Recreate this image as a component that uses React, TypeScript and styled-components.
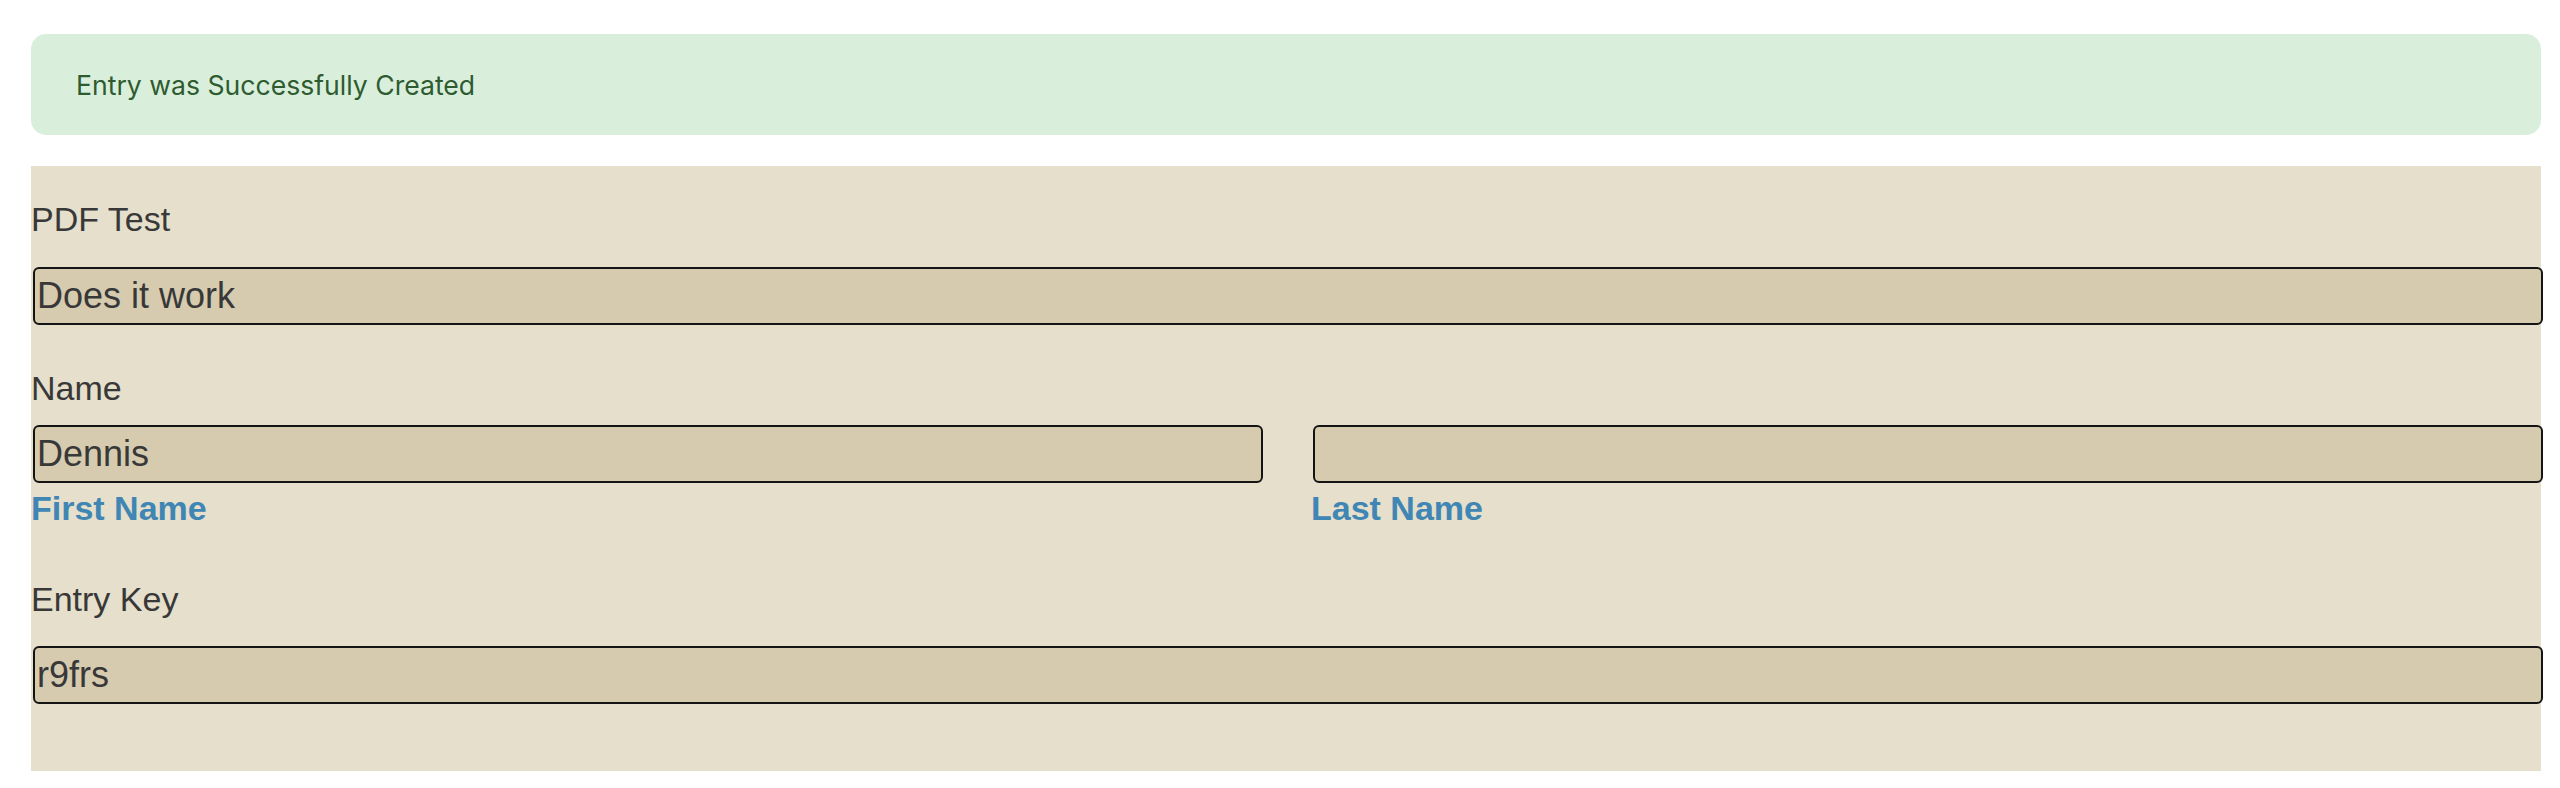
import React from "react";
import styled, { createGlobalStyle } from "styled-components";

const GlobalStyle = createGlobalStyle`
  html, body {
    margin: 0;
    padding: 0;
    background: #ffffff;
  }
  * { box-sizing: border-box; }
`;

const Page = styled.div`
  padding: 34px 19px 17px 31px;
  display: flex;
  flex-direction: column;
  gap: 31px;
`;

const Alert = styled.div`
  height: 101px;
  display: flex;
  align-items: center;
  padding: 0 45px;
  background: #d9efdc;
  border-radius: 15px;
  color: #2e5b30;
  font-family: Inter, "Noto Sans", sans-serif;
  font-size: 26.6px;
`;

const Panel = styled.form`
  background: #e5dfcb;
  padding: 34px 0 67px 0;
  display: flex;
  flex-direction: column;
  font-family: "Liberation Sans", Arial, sans-serif;
  color: #383838;
`;

const Field = styled.div<{ $gapAfter?: number }>`
  display: flex;
  flex-direction: column;
  margin-bottom: ${(p) => p.$gapAfter ?? 0}px;
`;

const Label = styled.label<{ $space: number }>`
  display: block;
  font-size: 34px;
  line-height: 39px;
  margin-bottom: ${(p) => p.$space}px;
`;

const Input = styled.input`
  display: block;
  width: 100%;
  height: 58px;
  margin: 0 0 0 2px;
  padding: 0 2px;
  background: #d6cbae;
  border: 2px solid #141414;
  border-radius: 6px;
  font-family: "Liberation Sans", Arial, sans-serif;
  font-size: 36px;
  color: #383838;
  outline: none;
`;

const Columns = styled.div`
  display: grid;
  grid-template-columns: 1fr 1fr;
  column-gap: 50px;
`;

const Column = styled.div`
  display: flex;
  flex-direction: column;
  gap: 6px;
`;

const SubLabel = styled.span`
  font-size: 34px;
  line-height: 39px;
  font-weight: 700;
  color: #3f86b4;
`;

export default function App() {
  return (
    <>
      <GlobalStyle />
      <Page>
        <Alert>Entry was Successfully Created</Alert>
        <Panel onSubmit={(e) => e.preventDefault()}>
          <Field $gapAfter={44}>
            <Label $space={28}>PDF Test</Label>
            <Input defaultValue="Does it work" />
          </Field>
          <Field $gapAfter={52}>
            <Label $space={17}>Name</Label>
            <Columns>
              <Column>
                <Input defaultValue="Dennis" />
                <SubLabel>First Name</SubLabel>
              </Column>
              <Column>
                <Input defaultValue="" />
                <SubLabel>Last Name</SubLabel>
              </Column>
            </Columns>
          </Field>
          <Field>
            <Label $space={27}>Entry Key</Label>
            <Input defaultValue="r9frs" />
          </Field>
        </Panel>
      </Page>
    </>
  );
}
